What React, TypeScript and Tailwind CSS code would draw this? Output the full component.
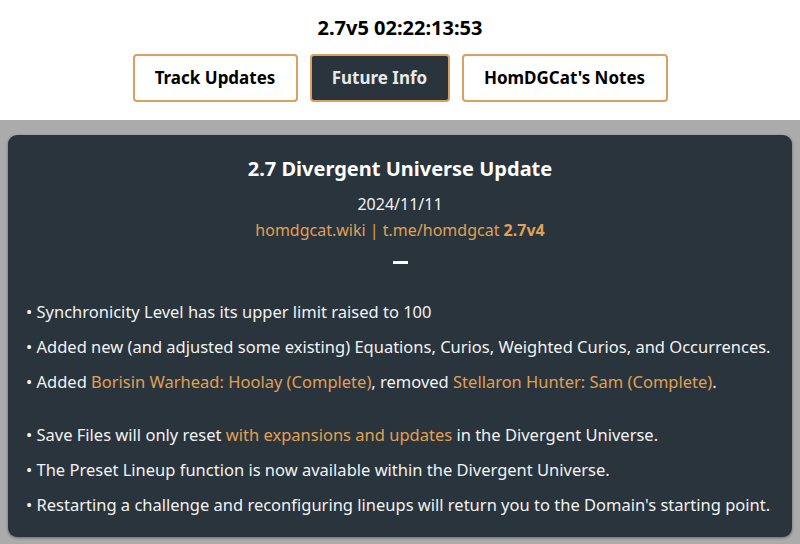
import React from "react";

const font = { fontFamily: '"Noto Sans", "Open Sans", sans-serif' };

export default function App() {
  return (
    <div className="w-[800px] h-[544px] flex flex-col bg-white overflow-hidden" style={font}>
      <div className="h-[120px] flex flex-col items-center bg-white">
        <div className="mt-[14px] text-[20px] font-bold leading-[28px] text-black">2.7v5 02:22:13:53</div>
        <div className="mt-[12px] flex gap-[12px]">
          <button className="w-[165px] h-[48px] rounded-[4px] border-2 border-[#d9a062] bg-white text-[17px] font-bold text-black">Track Updates</button>
          <button className="w-[140px] h-[48px] rounded-[4px] border-2 border-[#d9a062] bg-[#29343c] text-[17px] font-bold text-[#e8e8e8]">Future Info</button>
          <button className="w-[206px] h-[48px] rounded-[4px] border-2 border-[#d9a062] bg-white text-[17px] font-bold text-black">HomDGCat's Notes</button>
        </div>
      </div>
      <div className="flex-1 bg-[#ababab] px-[8px] pt-[15px] pb-[7px]">
        <div className="h-full rounded-[9px] bg-[#29343c] text-[#f2f2f2] px-[18px] shadow-[0_1px_3px_rgba(0,0,0,0.4)]">
          <div className="flex flex-col items-center">
            <div className="mt-[20px] text-[20px] font-bold leading-[28px] text-white">2.7 Divergent Universe Update</div>
            <div className="mt-[10px] text-[16px] leading-[22px]">2024/11/11</div>
            <div className="mt-[4px] text-[16px] leading-[22px] text-[#e0a055]">
              homdgcat.wiki | t.me/homdgcat <span className="font-bold">2.7v4</span>
            </div>
            <div className="mt-[20px] w-[15px] h-[3px] bg-white"></div>
          </div>
          <ul className="mt-[37px] text-[16.5px] leading-[22px] flex flex-col gap-[13px]">
            <li>• Synchronicity Level has its upper limit raised to 100</li>
            <li>• Added new (and adjusted some existing) Equations, Curios, Weighted Curios, and Occurrences.</li>
            <li>• Added <span className="text-[#e0a055]">Borisin Warhead: Hoolay (Complete)</span>, removed <span className="text-[#e0a055]">Stellaron Hunter: Sam (Complete)</span>.</li>
          </ul>
          <ul className="mt-[31px] text-[16.5px] leading-[22px] flex flex-col gap-[13px]">
            <li>• Save Files will only reset <span className="text-[#e0a055]">with expansions and updates</span> in the Divergent Universe.</li>
            <li>• The Preset Lineup function is now available within the Divergent Universe.</li>
            <li>• Restarting a challenge and reconfiguring lineups will return you to the Domain's starting point.</li>
          </ul>
        </div>
      </div>
    </div>
  );
}
